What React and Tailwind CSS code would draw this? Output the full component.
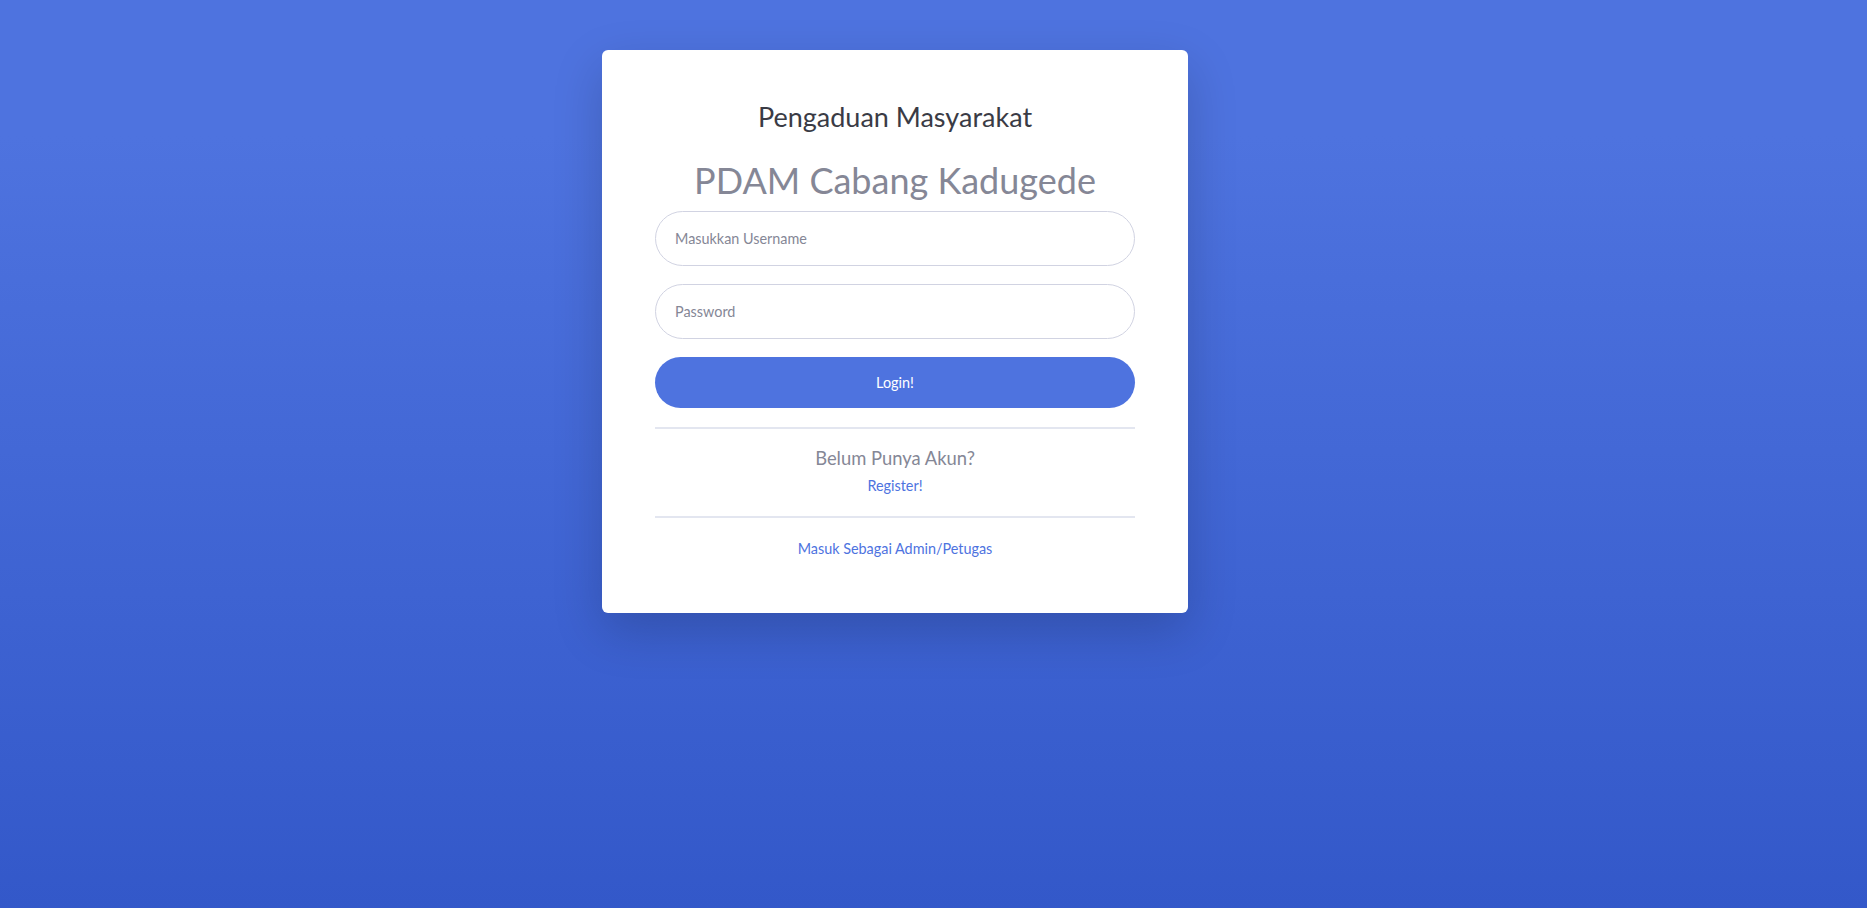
export default function App() {
  return (
    <div
      className="w-full h-[908px] overflow-hidden bg-[linear-gradient(180deg,#4e73df_136px,#3358c9_908px)]"
      style={{ fontFamily: 'Lato, "Open Sans", sans-serif' }}
    >
      <div className="pt-[50px] pl-[602px]">
        <div className="w-[586px] h-[563px] bg-white rounded-[6px] shadow-[0_18px_50px_rgba(0,0,0,0.18)] px-[53px] pt-[51px] flex flex-col">
          <h4 className="text-center text-[#3a3b45] text-[27px] leading-[32px] h-[32px] mb-[26px]">
            Pengaduan Masyarakat
          </h4>
          <h2 className="text-center text-[#858796] text-[36px] leading-[42px] h-[42px] mb-[10px]">
            PDAM Cabang Kadugede
          </h2>
          <div className="h-[55px] rounded-full border border-[#d1d3e2] flex items-center pl-[19px] text-[14.4px] text-[#858796]">
            Masukkan Username
          </div>
          <div className="h-[55px] mt-[18px] rounded-full border border-[#d1d3e2] flex items-center pl-[19px] text-[14.4px] text-[#858796]">
            Password
          </div>
          <div className="h-[51px] mt-[18px] rounded-full bg-[#4e73df] flex items-center justify-center text-[14.4px] text-white">
            Login!
          </div>
          <div className="mt-[19px] h-[2px] bg-[#e3e6f0]" />
          <div className="mt-[19px] text-center text-[18.4px] leading-[21px] text-[#858796]">
            Belum Punya Akun?
          </div>
          <div className="mt-[6px] text-center text-[14.4px] leading-[21px] text-[#4e73df]">
            Register!
          </div>
          <div className="mt-[20px] h-[2px] bg-[#e3e6f0]" />
          <div className="mt-[20px] text-center text-[14.4px] leading-[21px] text-[#4e73df]">
            Masuk Sebagai Admin/Petugas
          </div>
        </div>
      </div>
    </div>
  );
}
